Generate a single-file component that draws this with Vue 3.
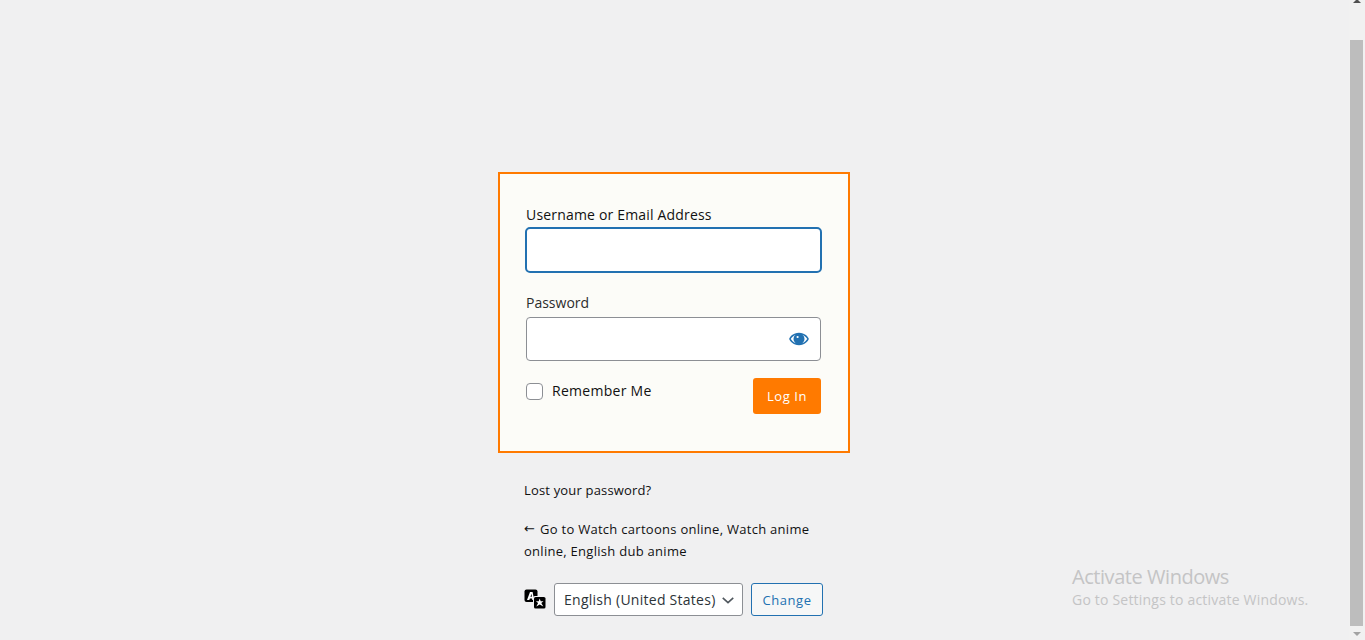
<script setup>
const username = ''
</script>

<template>
  <div class="page">
    <main class="login">
      <form class="card" @submit.prevent>
        <label class="label" for="user">Username or Email Address</label>
        <input id="user" class="field focused" type="text" :value="username" />
        <label class="label pass-label" for="pass">Password</label>
        <div class="pass-wrap">
          <input id="pass" class="field pass" type="password" />
          <svg class="eye" viewBox="0 0 20 20" aria-hidden="true">
            <path d="M10 3.800C4.200 3.800.6 8 .2 10c.4 2 4 6.200 9.800 6.200s9.400-4.200 9.800-6.200C19.400 8 15.800 3.800 10 3.800zM1.800 10c.9-1.500 2.400-3 4.800-4.200A5.200 5.200 0 0 0 6.600 14.200C4.200 13 2.700 11.500 1.800 10zm16.400 0c-.9 1.500-2.400 3-4.800 4.200A5.200 5.200 0 0 0 13.400 5.800c2.400 1.200 3.900 2.700 4.800 4.200zM8.600 6.900a1.100 1.100 0 1 0 0 2.200 1.100 1.100 0 0 0 0-2.200z" fill-rule="evenodd" />
          </svg>
        </div>
        <div class="actions">
          <label class="remember"><span class="check"></span>Remember Me</label>
          <button class="login-btn" type="submit">Log In</button>
        </div>
      </form>
      <p class="link lost">Lost your password?</p>
      <p class="link back">
        <span class="line"><span class="larr">←</span><span>Go to Watch cartoons online, Watch anime</span></span>
        <span class="line">online, English dub anime</span>
      </p>
      <div class="lang">
        <svg class="translate" viewBox="0 0 22 20" aria-hidden="true">
          <rect x="0.5" y="0.5" width="13" height="12.500" rx="2" fill="#000" />
          <path d="M3 11 6 3h2.600l1.600 8H8.300l-.2-1.600H5.900L5.300 11zm3.400-3.200h1.500L7.500 4.800z" fill="#fff" fill-rule="evenodd" />
          <rect x="9" y="7" width="13" height="13" rx="2" fill="#f0f0f1" />
          <rect x="10" y="8" width="11.500" height="11.500" rx="1.600" fill="#000" />
          <path d="m15.700 9.600 1 2.700h2.800l-2.200 1.800 2 3.300-3.600-2-3.400 2 1.800-3.300-2.200-1.800h2.800z" fill="#fff" />
        </svg>
        <div class="select-box">
          <span>English (United States)</span>
          <svg class="chev" viewBox="0 0 16 16" aria-hidden="true"><path d="M2 5.500 8 11l6-5.500" /></svg>
        </div>
        <button class="change" type="button">Change</button>
      </div>
    </main>

    <aside class="watermark">
      <div class="wm-title">Activate Windows</div>
      <div class="wm-sub">Go to Settings to activate Windows.</div>
    </aside>

    <div class="scrollbar">
      <span class="arrow up"></span>
      <span class="thumb"></span>
      <span class="arrow down"></span>
    </div>
  </div>
</template>

<style>
html, body { margin: 0; padding: 0; background: #f0f0f1; overflow: hidden; }
</style>

<style scoped>
.page {
  position: relative;
  height: 640px;
  box-sizing: border-box;
  padding: 172px 16px 0 0;
  overflow: hidden;
  background: #f0f0f1;
  font-family: "Open Sans", "Noto Sans", sans-serif;
  color: #111;
  display: flex;
  justify-content: center;
}
.login { width: 352px; margin-left: -1px; }
.card {
  box-sizing: border-box;
  width: 352px;
  height: 281px;
  border: 2px solid #ff7a00;
  background: #fcfcf8;
  padding: 31px 27px 0 26px;
  display: flex;
  flex-direction: column;
}
.label { font-size: 14px; line-height: 20px; letter-spacing: 0.18px; color: #111; }
.field {
  display: block;
  box-sizing: border-box;
  width: 295px;
  height: 44px;
  border: 1px solid #8c8f94;
  border-radius: 4px;
  background: #fff;
  outline: none;
  padding: 0;
}
.focused {
  width: 297px;
  height: 46px;
  margin: 2px 0 0 -1px;
  border: 2px solid #2271b1;
  border-radius: 5px;
}
.pass { margin: 4px 0 0; }
.pass-label { margin-top: 20px; letter-spacing: 0; color: #2c2c2c; }
.pass-wrap { position: relative; width: 295px; }
.eye {
  position: absolute;
  top: 16px;
  right: 12px;
  width: 20px;
  height: 20px;
  fill: #2271b1;
}
.actions {
  display: flex;
  justify-content: space-between;
  align-items: flex-start;
  width: 295px;
  margin-top: 17px;
}
.remember {
  display: flex;
  align-items: center;
  gap: 9px;
  margin-top: 3px;
  font-size: 14px;
  line-height: 20px;
  letter-spacing: 0.28px;
  color: #111;
}
.check {
  box-sizing: border-box;
  width: 17px;
  height: 17px;
  border: 1px solid #8c8f94;
  border-radius: 4px;
  background: #fff;
}
.login-btn {
  box-sizing: border-box;
  width: 68px;
  height: 36px;
  border: 0;
  border-radius: 3px;
  background: #ff7a00;
  color: #fff;
  font: 13px/36px "Open Sans", "Noto Sans", sans-serif;
  letter-spacing: 0.6px;
  padding: 0;
}
.link {
  margin: 0 0 0 26px;
  width: 296px;
  font-size: 13px;
  line-height: 22px;
  letter-spacing: 0.17px;
  color: #111;
}
.lost { margin-top: 26px; }
.back { margin-top: 17px; letter-spacing: 0.28px; }
.line { display: flex; height: 22px; white-space: nowrap; }
.larr { flex: none; width: 16px; font-family: "DejaVu Sans", sans-serif; font-size: 13px; letter-spacing: 0; }
.lang {
  display: flex;
  align-items: center;
  margin: 21px 0 0 26px;
}
.translate { width: 22px; height: 20px; margin-right: 8px; margin-top: -2px; }
.select-box {
  box-sizing: border-box;
  width: 189px;
  height: 33px;
  border: 1px solid #8c8f94;
  border-radius: 3px;
  background: #fff;
  display: flex;
  align-items: center;
  justify-content: space-between;
  padding: 0 7px 0 9px;
  font-size: 14px;
  letter-spacing: 0.26px;
  color: #2c3338;
}
.chev { width: 14px; height: 14px; fill: none; stroke: #50575e; stroke-width: 1.800; }
.change {
  box-sizing: border-box;
  width: 72px;
  height: 33px;
  margin-left: 8px;
  border: 1px solid #2271b1;
  border-radius: 3px;
  background: #f6f7f7;
  color: #2271b1;
  font: 13px "Open Sans", "Noto Sans", sans-serif;
  letter-spacing: 0.55px;
  padding: 0;
}
.watermark {
  position: absolute;
  left: 1072px;
  top: 564px;
  color: #c4c4c5;
}
.wm-title { font-size: 20px; line-height: 26px; letter-spacing: -0.45px; }
.wm-sub { font-size: 14px; line-height: 20px; letter-spacing: 0.2px; }
.scrollbar {
  position: absolute;
  top: 0;
  right: 0;
  bottom: 0;
  width: 16px;
  background: #f1f1f1;
}
.thumb {
  position: absolute;
  left: 1px;
  top: 40px;
  width: 13px;
  height: 586px;
  background: #bdbdbd;
}
.arrow { position: absolute; left: 4px; width: 0; height: 0; border-left: 4px solid transparent; border-right: 4px solid transparent; }
.arrow.up { top: -1px; border-bottom: 4px solid #505050; }
.arrow.down { top: 632px; border-top: 4px solid #a3a3a3; }
</style>
